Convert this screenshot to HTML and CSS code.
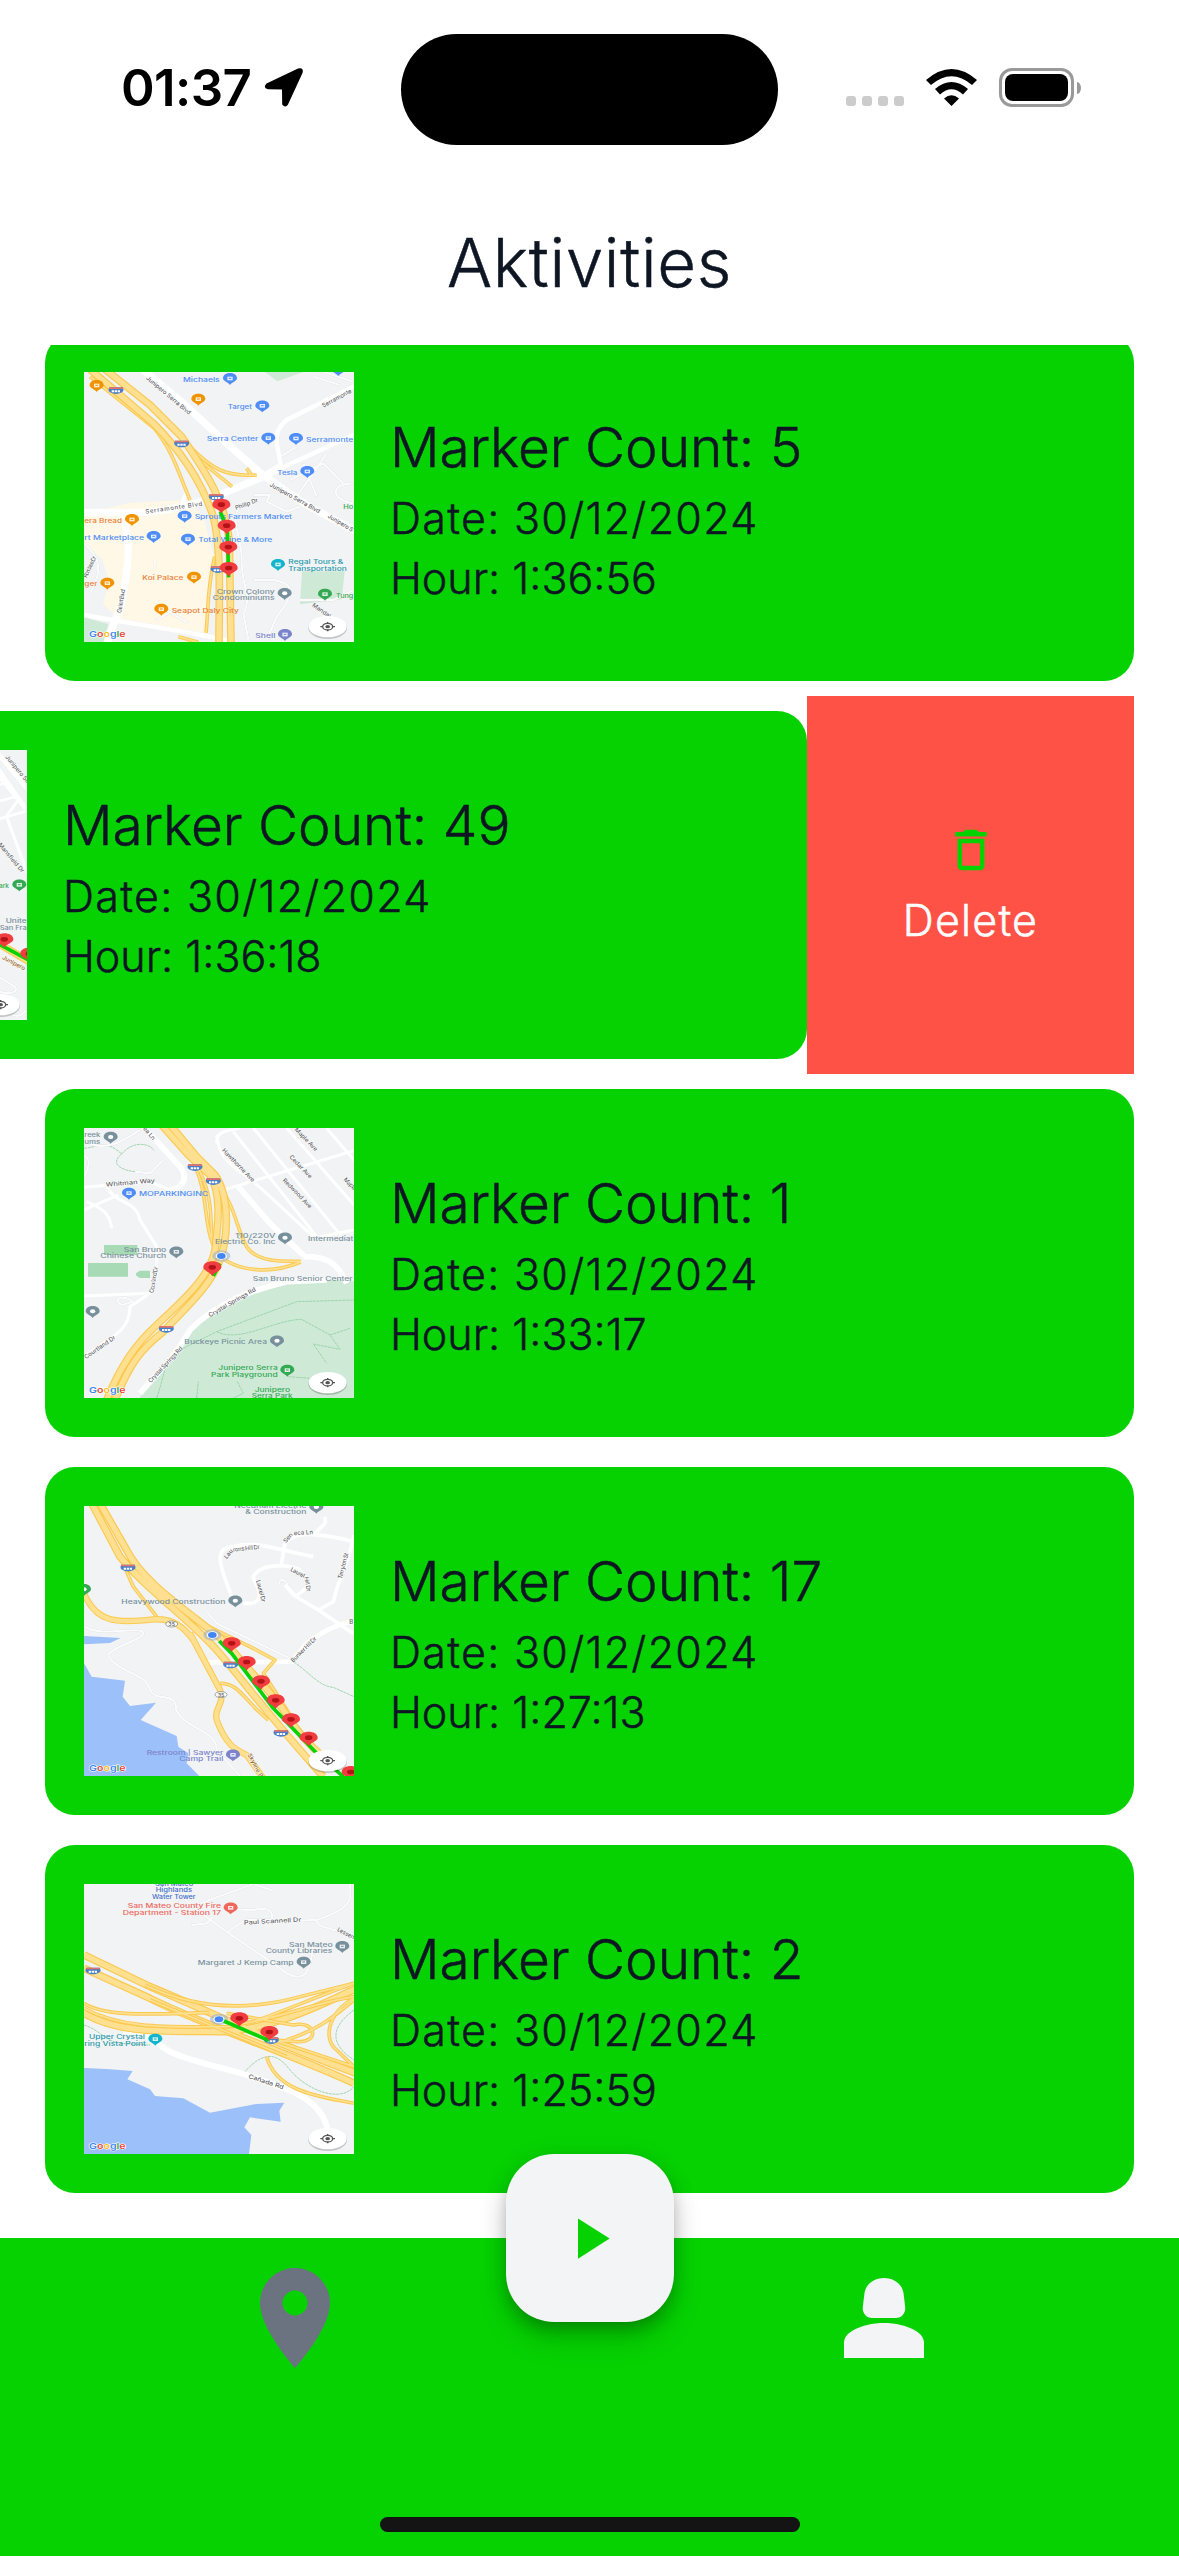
FILE: index.html
```html
<!DOCTYPE html>
<html lang="en">
<head>
<meta charset="utf-8">
<title>Aktivities</title>
<link rel="stylesheet" href="styles.css">
</head>
<body>
<svg class="sprite" aria-hidden="true">
  <defs>
    <path id="pin" d="M-21 0C-21-21 21-21 21 0C21 9 7 10 0 20C-7 10-21 9-21 0Z"/>
    <g id="poi"><use href="#pin" fill="currentColor"/><path d="M-8-5H8V6H-8Z" fill="#fff" opacity=".85"/><path d="M-4 0H4" stroke="currentColor" stroke-width="3"/></g>
    <g id="spot"><use href="#pin" fill="currentColor"/><ellipse rx="8" ry="6" fill="#fff"/></g>
    <g id="marker"><path d="M-27 0C-27-24 27-24 27 0C27 11 8 12 0 26C-8 12-27 11-27 0Z" fill="#f13c40"/><ellipse rx="11" ry="7" fill="#b31217"/></g>
    <g id="shield"><path d="M-20-9H20C28 5 15 9 0 11C-15 9-28 5-20-9Z" fill="#4a7fc9"/><path d="M-20-9H20V-4H-21Z" fill="#e2736a"/><path d="M-13 3H13" stroke="#fff" stroke-width="6" stroke-dasharray="7 2"/></g>
    <g id="me"><ellipse rx="27" ry="17" fill="#8fa9cf" opacity=".5"/><ellipse rx="17" ry="11" fill="#fff"/><ellipse rx="13" ry="9" fill="#4285f4"/></g>
    <g id="locate"><ellipse cx="731" cy="768" rx="58" ry="33" fill="#000" opacity=".2"/><ellipse cx="731" cy="764" rx="57" ry="32" fill="#fff"/><ellipse cx="731" cy="764" rx="15" ry="10" fill="none" stroke="#555" stroke-width="4"/><ellipse cx="731" cy="764" rx="7" ry="5" fill="#555"/><path d="M709 764H717M745 764H753M731 750V755M731 773V778" stroke="#555" stroke-width="4"/></g>
  </defs>
</svg>

<header class="status">
  <div class="status-left">
    <span class="clock">01:37</span>
    <svg class="loc" viewBox="0 0 39 39"><path d="M2.500 15.500L34 .6Q40-1 38.500 5L24 36.500Q21.500 40.500 18.200 36.500L18 21.500L4 21.200Q-1.500 20 2.500 15.500Z"/></svg>
  </div>
  <div class="island"></div>
  <div class="status-right">
    <div class="dots"><i></i><i></i><i></i><i></i></div>
    <svg class="wifi" viewBox="0 0 51 38"><path d="M0 11Q25.500-11 51 11L46 16Q25.500-1.500 5 16ZM9 20Q25.500 6 42 20L37 25.500Q25.500 15 14 25.500ZM18 29.500Q25.500 23 33 29.500L25.500 37Z"/></svg>
    <div class="battery"><div class="charge"></div></div>
    <div class="nub"></div>
  </div>
</header>

<h1 class="title">Aktivities</h1>

<main class="list">
  <section class="row">
    <article class="card">
      <svg class="map" viewBox="132 126 810 810">
        <defs>
          <path id="a1" d="M150 118L340 280C440 380 490 470 520 560C545 660 537 800 537 940M195 118L330 225L425 320C500 430 560 520 568 640L573 940"/>
          <path id="a2" d="M335 285C400 360 415 430 450 510M420 320C480 400 530 430 576 470M430 330C520 425 560 440 650 435M620 415L635 438M524 680C500 780 505 850 498 908M415 920L475 937M150 140L350 300"/>
        </defs>
        <path class="cream" d="M150 548L270 518L440 510L490 560L522 680L498 910L235 865L188 822L208 760L188 690L132 640V560Z"/>
        <path class="park" d="M675 126H790L712 154ZM786 724H914L905 808L780 823ZM132 862L205 882L190 936H132Z"/>
        <path class="lane" d="M600 520C570 580 600 600 605 680C600 760 640 800 610 850L625 930M640 495H690L680 515L740 545L780 530M640 750H700C770 760 760 800 710 860L680 930M750 450L850 400L910 460M770 500L860 370M790 400L830 500M940 460C870 460 870 510 940 520M720 380L770 350M820 140L900 165M850 126L940 155M132 640C180 680 190 720 150 790M780 810H880L940 780M345 690V710M380 840L445 880M350 870L400 840M420 520L440 490"/>
        <path class="road" stroke-width="22" d="M300 112L430 220L560 340L665 432L800 525L950 605"/>
        <path class="road" stroke-width="22" d="M132 548C250 545 340 560 480 515C560 490 620 460 680 435L725 408M248 560C275 640 265 700 250 790C240 850 220 870 203 940"/>
        <path class="road" stroke-width="13" d="M723 410C715 350 690 310 740 270L950 165M690 430L950 310M132 855C260 880 400 895 580 935M425 520L440 490"/>
        <use href="#a2" class="hw thin"/><use href="#a2" class="hw-in thin"/>
        <use href="#a1" class="hw"/><use href="#a1" class="hw-in"/>
        <use href="#shield" x="228" y="181"/><use href="#shield" x="425" y="341"/><use href="#shield" x="529" y="501"/><use href="#shield" x="534" y="718"/>
        <text class="lb blue" x="429" y="155" textLength="110" lengthAdjust="spacingAndGlyphs">Michaels</text>
        <text class="lb blue" x="563" y="237" textLength="73" lengthAdjust="spacingAndGlyphs">Target</text>
        <text class="lb blue" x="500" y="334" textLength="155" lengthAdjust="spacingAndGlyphs">Serra Center</text>
        <text class="lb blue" x="798" y="336" textLength="142" lengthAdjust="spacingAndGlyphs">Serramonte</text>
        <text class="lb blue" x="712" y="434" textLength="60" lengthAdjust="spacingAndGlyphs">Tesla</text>
        <text class="lb blue" x="464" y="568" textLength="292" lengthAdjust="spacingAndGlyphs">Sprouts Farmers Market</text>
        <text class="lb blue" x="475" y="637" textLength="222" lengthAdjust="spacingAndGlyphs">Total Wine &amp; More</text>
        <text class="lb blue" x="133" y="629" textLength="179" lengthAdjust="spacingAndGlyphs">rt Marketplace</text>
        <text class="lb orange" x="133" y="578" textLength="113" lengthAdjust="spacingAndGlyphs">era Bread</text>
        <text class="lb orange" x="307" y="751" textLength="123" lengthAdjust="spacingAndGlyphs">Koi Palace</text>
        <text class="lb orange" x="133" y="769" textLength="39" lengthAdjust="spacingAndGlyphs">ger</text>
        <text class="lb orange" x="395" y="848" textLength="202" lengthAdjust="spacingAndGlyphs">Seapot Daly City</text>
        <text class="lb teal" x="745" y="703" textLength="165" lengthAdjust="spacingAndGlyphs">Regal Tours &amp;</text>
        <text class="lb teal" x="745" y="723" textLength="175" lengthAdjust="spacingAndGlyphs">Transportation</text>
        <text class="lb grey" x="530" y="792" textLength="174" lengthAdjust="spacingAndGlyphs">Crown Colony</text>
        <text class="lb grey" x="518" y="811" textLength="186" lengthAdjust="spacingAndGlyphs">Condominiums</text>
        <text class="lb green" x="888" y="803" textLength="52" lengthAdjust="spacingAndGlyphs">Tung</text>
        <text class="lb green" x="910" y="536" textLength="30" lengthAdjust="spacingAndGlyphs">Ho</text>
        <text class="lb violet" x="646" y="923" textLength="60" lengthAdjust="spacingAndGlyphs">Shell</text>
        <text class="st" transform="translate(317 146)rotate(40)">Junipero Serra Blvd</text>
        <text class="st" transform="translate(688 468)rotate(29)">Junipero Serra Blvd</text>
        <text class="st" transform="translate(862 562)rotate(31)" textLength="86">Junipero S</text>
        <text class="st" transform="translate(317 551)rotate(-8)" textLength="172">Serramonte Blvd</text>
        <text class="st" transform="translate(850 233)rotate(-28)" textLength="98">Serramonte</text>
        <text class="st" transform="translate(588 540)rotate(-20)">Philip Dr</text>
        <text class="st" transform="translate(243 850)rotate(-80)" textLength="72">Gellert Blvd</text>
        <text class="st" transform="translate(140 745)rotate(-65)" textLength="70">Romtree Dr</text>
        <text class="st" transform="translate(815 828)rotate(35)">Mandal</text>
        <g class="blue"><use href="#poi" x="570" y="145"/><use href="#poi" x="667" y="227"/><use href="#poi" x="685" y="324"/><use href="#poi" x="768" y="325"/><use href="#poi" x="802" y="424"/><use href="#poi" x="434" y="558"/><use href="#poi" x="341" y="619"/><use href="#poi" x="444" y="627"/><use href="#poi" x="895" y="118"/></g>
        <g class="orange"><use href="#poi" x="170" y="166"/><use href="#poi" x="475" y="207"/><use href="#poi" x="276" y="568"/><use href="#poi" x="462" y="741"/><use href="#poi" x="202" y="759"/><use href="#poi" x="364" y="837"/></g>
        <use href="#poi" class="teal" x="714" y="703"/><use href="#spot" class="grey" x="734" y="790"/><use href="#poi" class="green" x="855" y="792"/><use href="#poi" class="violet" x="735" y="913"/>
        <path class="route" d="M541 545L562 600L566 742"/>
        <use href="#marker" x="544" y="524"/><use href="#marker" x="560" y="587"/><use href="#marker" x="565" y="651"/><use href="#marker" x="566" y="714"/>
        <text class="goog" x="147" y="922" textLength="110" lengthAdjust="spacingAndGlyphs"><tspan fill="#4285f4">G</tspan><tspan fill="#ea4335">o</tspan><tspan fill="#fbbc05">o</tspan><tspan fill="#4285f4">g</tspan><tspan fill="#34a853">l</tspan><tspan fill="#ea4335">e</tspan></text>
        <use href="#locate" x="132" y="126"/>
      </svg>
      <div class="info"><h2>Marker Count: 5</h2><p class="date">Date: 30/12/2024</p><p>Hour: 1:36:56</p></div>
    </article>
  </section>

  <section class="row">
    <article class="card">
      <svg class="map" viewBox="-728 180 810 810">
        <path class="road" stroke-width="14" d="M-20 172L90 305M-40 210L90 370"/>
        <path class="road" stroke-width="8" d="M-20 290L25 275M-20 338L55 318M-30 395L90 360M-10 225L90 370M20 378L90 565"/>
        <path class="road" stroke-width="8" d="M-20 240L60 325L20 378L90 570"/>
        <path class="lane" d="M-20 850L45 890C60 905 30 920-10 900M40 975C70 985 70 960 90 960"/>
        <path class="hw" d="M-20 750L100 822"/><path class="hw-in" d="M-20 750L100 822"/>
        <path class="route" d="M-10 758L90 812"/>
        <text class="st" transform="translate(16 202)rotate(50)">Junipero Serra</text>
        <text class="st" transform="translate(-5 465)rotate(50)">Mansfield Dr</text>
        <text class="st brown" transform="translate(6 806)rotate(28)">Junipero</text>
        <text class="lb green" x="-2" y="594" textLength="30" lengthAdjust="spacingAndGlyphs">ark</text>
        <text class="lb grey" x="18" y="699" textLength="63" lengthAdjust="spacingAndGlyphs">Unite</text>
        <text class="lb grey" x="0" y="719" textLength="81" lengthAdjust="spacingAndGlyphs">San Fra</text>
        <use href="#poi" class="green" x="59" y="584"/>
        <use href="#marker" x="14" y="748"/><use href="#marker" x="89" y="791"/>
        <use href="#locate" x="-728" y="180"/>
      </svg>
      <div class="info"><h2>Marker Count: 49</h2><p class="date">Date: 30/12/2024</p><p>Hour: 1:36:18</p></div>
    </article>
    <div class="delete">
      <svg viewBox="0 0 24 24"><path d="M6 19c0 1.100.9 2 2 2h8c1.100 0 2-.9 2-2V7H6v12zM8 9h8v10H8V9zm7.500-5-1-1h-5l-1 1H5v2h14V4z"/></svg>
      <span>Delete</span>
    </div>
  </section>

  <section class="row">
    <article class="card">
      <svg class="map" viewBox="132 144 810 810">
        <defs>
          <path id="c1" d="M365 135L445 225L510 285C545 340 535 430 525 510C510 590 430 660 350 735C290 790 245 850 200 960M395 140L470 230L525 285C570 350 565 470 540 540C510 620 440 680 370 755C300 810 270 850 225 960"/>
          <path id="c2" d="M470 270C505 350 490 430 520 495M480 275C520 360 510 420 516 470M535 310C590 390 590 450 620 500C650 545 720 545 782 544M555 540C600 570 690 585 782 546"/>
        </defs>
        <path class="park" d="M300 954C320 900 400 860 430 790C450 720 560 660 720 610L860 600L942 604V954Z"/>
        <path class="park dark" d="M192 495H292V525H192ZM144 549H264V590H144ZM300 572H330V594H300Q275 583 300 572Z"/>
        <path class="trail" d="M132 205C180 200 200 180 245 222C280 180 330 190 342 212M245 222C210 250 240 270 285 275M350 954C370 900 370 860 400 820L530 755L770 665L942 660M530 755C600 790 700 720 785 718L870 765L900 808L820 792L860 850M470 954L475 905M592 905L610 940L580 954M745 890L810 895M870 765L930 745"/>
        <path class="lane" d="M132 290C160 240 140 230 132 225M285 275L330 280L370 240M132 180C200 230 280 160 300 150M280 665C240 640 220 660 245 675Z"/>
        <path class="road" stroke-width="17" d="M310 140L420 260C450 300 420 330 385 330M595 320L690 430L795 530C850 530 890 540 920 610M300 940C350 880 400 840 450 750C520 680 600 640 740 605L860 600"/>
        <path class="road" stroke-width="9" d="M132 322L330 305L400 335M132 390L235 345M200 320C220 370 290 360 300 420L350 500V590L330 640L270 680C270 740 240 760 132 830M132 648L330 640M140 365C200 390 210 410 215 445M550 330L942 212M860 145L942 240M740 144L942 375M640 144L905 470M580 155L830 470M530 165C540 260 600 260 690 350L820 470M530 190C530 150 560 155 600 144M840 470L942 450"/>
        <use href="#c2" class="hw thin"/><use href="#c2" class="hw-in thin"/>
        <use href="#c1" class="hw"/><use href="#c1" class="hw-in"/>
        <use href="#shield" x="465" y="262"/><use href="#shield" x="520" y="304"/><use href="#shield" x="379" y="747"/>
        <text class="lb grey" x="133" y="172" textLength="48" lengthAdjust="spacingAndGlyphs">reek</text>
        <text class="lb grey" x="133" y="191" textLength="48" lengthAdjust="spacingAndGlyphs">ums</text>
        <text class="lb blue" x="297" y="348" textLength="208" lengthAdjust="spacingAndGlyphs">MOPARKINGINC</text>
        <text class="lb grey" x="251" y="516" textLength="128" lengthAdjust="spacingAndGlyphs">San Bruno</text>
        <text class="lb grey" x="181" y="535" textLength="198" lengthAdjust="spacingAndGlyphs">Chinese Church</text>
        <text class="lb grey" x="586" y="473" textLength="120" lengthAdjust="spacingAndGlyphs">110/220V</text>
        <text class="lb grey" x="525" y="492" textLength="181" lengthAdjust="spacingAndGlyphs">Electric Co. Inc</text>
        <text class="lb grey" x="804" y="482" textLength="136" lengthAdjust="spacingAndGlyphs">Intermediat</text>
        <text class="lb grey" x="638" y="603" textLength="300" lengthAdjust="spacingAndGlyphs">San Bruno Senior Center</text>
        <text class="lb grey" x="433" y="792" textLength="248" lengthAdjust="spacingAndGlyphs">Buckeye Picnic Area</text>
        <text class="lb green" x="535" y="870" textLength="178" lengthAdjust="spacingAndGlyphs">Junipero Serra</text>
        <text class="lb green" x="513" y="890" textLength="200" lengthAdjust="spacingAndGlyphs">Park Playground</text>
        <text class="lb green" x="644" y="936" textLength="106" lengthAdjust="spacingAndGlyphs">Junipero</text>
        <text class="lb green" x="635" y="953" textLength="123" lengthAdjust="spacingAndGlyphs">Serra Park</text>
        <text class="st" transform="translate(198 320)rotate(-5)" textLength="148" lengthAdjust="spacingAndGlyphs">Whitman Way</text>
        <text class="st" transform="translate(308 146)rotate(50)">ea Ln</text>
        <text class="st" transform="translate(545 212)rotate(46)">Hawthorne Ave</text>
        <text class="st" transform="translate(727 302)rotate(46)">Redwood Ave</text>
        <text class="st" transform="translate(747 232)rotate(46)">Cedar Ave</text>
        <text class="st" transform="translate(763 150)rotate(46)">Maple Ave</text>
        <text class="st" transform="translate(910 300)rotate(46)" textLength="44">Maple</text>
        <text class="st" transform="translate(340 640)rotate(-80)" textLength="80">Courtland Dr</text>
        <text class="st" transform="translate(138 838)rotate(-35)">Courtland Dr</text>
        <text class="st" transform="translate(510 712)rotate(-30)">Crystal Springs Rd</text>
        <text class="st" transform="translate(332 910)rotate(-47)" textLength="142">Crystal Springs Rd</text>
        <g class="grey"><use href="#spot" x="212" y="171"/><use href="#poi" x="409" y="515"/><use href="#spot" x="735" y="473"/><use href="#spot" x="158" y="694"/><use href="#spot" x="711" y="782"/></g>
        <use href="#poi" class="blue" x="267" y="339"/><use href="#poi" class="green" x="742" y="870"/>
        <use href="#me" x="544" y="528"/>
        <path class="route" d="M520 588L540 550"/>
        <use href="#marker" x="517" y="562"/>
        <text class="goog" x="147" y="940" textLength="110" lengthAdjust="spacingAndGlyphs"><tspan fill="#4285f4">G</tspan><tspan fill="#ea4335">o</tspan><tspan fill="#fbbc05">o</tspan><tspan fill="#4285f4">g</tspan><tspan fill="#34a853">l</tspan><tspan fill="#ea4335">e</tspan></text>
        <use href="#locate" x="132" y="144"/>
      </svg>
      <div class="info"><h2>Marker Count: 1</h2><p class="date">Date: 30/12/2024</p><p>Hour: 1:33:17</p></div>
    </article>
  </section>

  <section class="row">
    <article class="card">
      <svg class="map" viewBox="132 138 810 810">
        <defs>
          <path id="d1" d="M155 130L240 290C310 380 440 470 530 570C600 650 680 760 850 950M180 130L260 270C310 370 440 450 560 550C640 650 700 700 730 750C760 800 800 850 860 900"/>
          <path id="d2" d="M132 400C170 490 230 490 340 478C400 475 430 500 460 540L540 690C555 740 520 740 530 780C560 860 590 870 620 885L670 955M450 520L540 690"/>
          <path id="d3" d="M240 290L280 380L350 470M490 492L640 565L705 600L670 640L760 780M540 670C600 670 610 720 685 780M640 740L685 780"/>
        </defs>
        <path class="water" d="M132 528L242 534L210 549L132 553ZM132 610L155 650L255 662L248 710L270 738L348 728L302 780L410 828L415 860L445 880L440 910L478 948H132Z"/>
        <path class="lane" d="M132 498C180 530 250 505 300 512C350 530 200 560 205 590C240 640 320 640 330 690C350 730 410 690 408 750C440 810 530 810 530 870L600 948M500 455L530 490L760 600"/>
        <path class="lane" d="M720 375C710 355 740 355 742 375L770 405"/>
        <path class="trail" d="M762 606C810 640 840 680 880 682L942 710"/>
        <path class="road" stroke-width="11" d="M575 410C550 340 510 260 580 260C640 240 720 270 820 290M723 317L735 250C760 215 820 215 942 245M642 430C680 400 640 370 640 350C660 310 740 310 780 330C820 370 800 390 765 408L735 375M765 408L835 450L942 522M835 450L880 425C900 340 930 300 942 225M825 220L855 190V170M610 430H640"/>
        <path class="road" stroke-width="14" d="M500 608L755 605L800 550C840 520 890 490 942 485"/>
        <use href="#d3" class="hw thin"/><use href="#d3" class="hw-in thin"/>
        <use href="#d2" class="hw mid"/><use href="#d2" class="hw-in mid"/>
        <use href="#d1" class="hw"/><use href="#d1" class="hw-in"/>
        <use href="#shield" x="264" y="323"/><use href="#shield" x="572" y="614"/><use href="#shield" x="723" y="819"/>
        <g class="oval"><ellipse cx="395" cy="492" rx="18" ry="9"/><ellipse cx="543" cy="704" rx="18" ry="9"/></g>
        <text class="tiny" x="385" y="498">35</text><text class="tiny" x="533" y="710">35</text>
        <text class="lb grey" x="583" y="143" textLength="216" lengthAdjust="spacingAndGlyphs">Needham Electric</text>
        <text class="lb grey" x="616" y="162" textLength="183" lengthAdjust="spacingAndGlyphs">&amp; Construction</text>
        <text class="lb grey" x="244" y="431" textLength="312" lengthAdjust="spacingAndGlyphs">Heavywood Construction</text>
        <text class="lb violet" x="320" y="885" textLength="230" lengthAdjust="spacingAndGlyphs">Restroom | Sawyer</text>
        <text class="lb violet" x="418" y="904" textLength="132" lengthAdjust="spacingAndGlyphs">Camp Trail</text>
        <text class="st" transform="translate(560 298)rotate(-50)">Lau</text>
        <text class="st" transform="translate(580 275)rotate(-6)" textLength="80">rons Hill Dr</text>
        <text class="st" transform="translate(738 250)rotate(-50)">Sen</text>
        <text class="st" transform="translate(762 226)rotate(-4)">eca Ln</text>
        <text class="st" transform="translate(750 332)rotate(28)" textLength="46">Laurel</text>
        <text class="st" transform="translate(793 352)rotate(80)" textLength="44">Hill Dr</text>
        <text class="st" transform="translate(648 362)rotate(75)" textLength="68">Laurel Dr</text>
        <text class="st" transform="translate(905 358)rotate(-75)" textLength="80">Tarryton St</text>
        <text class="st" transform="translate(760 608)rotate(-45)" textLength="100">Bunker Hill Dr</text>
        <text class="st" x="928" y="492">B</text>
        <text class="st brown" transform="translate(622 884)rotate(62)">Skyline Blvd</text>
        <g class="grey"><use href="#spot" x="829" y="141"/><use href="#spot" x="586" y="422"/></g>
        <use href="#poi" class="violet" x="579" y="884"/><use href="#spot" class="green" x="132" y="388"/>
        <use href="#me" x="517" y="525"/>
        <path class="route" d="M538 543L575 580L700 745L830 880L910 950"/>
        <use href="#marker" x="575" y="550"/><use href="#marker" x="620" y="606"/><use href="#marker" x="663" y="664"/><use href="#marker" x="707" y="721"/><use href="#marker" x="753" y="778"/><use href="#marker" x="806" y="833"/><use href="#marker" x="932" y="936"/>
        <text class="goog" x="147" y="934" textLength="110" lengthAdjust="spacingAndGlyphs"><tspan fill="#4285f4">G</tspan><tspan fill="#ea4335">o</tspan><tspan fill="#fbbc05">o</tspan><tspan fill="#4285f4">g</tspan><tspan fill="#34a853">l</tspan><tspan fill="#ea4335">e</tspan></text>
        <use href="#locate" x="132" y="138"/>
      </svg>
      <div class="info"><h2>Marker Count: 17</h2><p class="date">Date: 30/12/2024</p><p>Hour: 1:27:13</p></div>
    </article>
  </section>

  <section class="row">
    <article class="card">
      <svg class="map" viewBox="132 132 810 810">
        <defs>
          <path id="e1" d="M132 385L330 475C500 560 700 620 942 730M132 520C250 590 420 570 560 575C720 560 850 490 950 445M132 345L330 440C500 510 700 610 950 700"/>
          <path id="e2" d="M132 490C200 535 360 520 510 518M315 435C450 500 600 520 780 470L942 430M132 505C250 570 400 560 560 560C700 540 820 490 942 470M942 475C860 520 850 600 890 630L942 680M680 650C710 760 850 770 942 790M560 520L760 555C830 540 840 610 770 605L700 600M740 600C830 570 870 540 942 480M330 480L740 650M640 545C740 510 830 470 942 430M700 600L942 680"/>
        </defs>
        <path class="water" d="M132 684L200 687L278 693L262 718L330 748L345 768L430 775L510 818L650 792L733 788L718 812L722 845L630 832L613 862L634 885L627 942H132Z"/>
        <path class="lane" d="M420 165L470 210L560 275C640 330 700 370 740 400C800 430 810 390 820 320M480 190L640 132L700 152M455 255L500 250L520 230M575 208L640 210C690 200 700 215 695 240L620 240C580 260 570 270 562 280M690 245L830 240C950 200 930 170 930 132M830 240C830 270 900 260 942 300M330 132L420 165"/>
        <path class="trail" d="M132 555C180 570 190 600 240 610L330 615M612 698C680 620 720 650 750 690C800 750 900 790 942 740M942 510C860 570 880 620 942 660"/>
        <path class="road" stroke-width="18" d="M250 572C340 580 340 610 400 640C470 670 540 680 620 705L735 745C800 770 850 810 862 865"/>
        <use href="#e1" class="hw"/><use href="#e1" class="hw-in"/>
        <use href="#e2" class="hw thin"/><use href="#e2" class="hw-in thin"/>
        <use href="#shield" x="159" y="392"/><use href="#shield" x="694" y="601"/>
        <text class="lb navy" x="345" y="138" textLength="115" lengthAdjust="spacingAndGlyphs">San Mateo</text>
        <text class="lb navy" x="347" y="157" textLength="109" lengthAdjust="spacingAndGlyphs">Highlands</text>
        <text class="lb navy" x="336" y="176" textLength="131" lengthAdjust="spacingAndGlyphs">Water Tower</text>
        <text class="lb red" x="263" y="205" textLength="280" lengthAdjust="spacingAndGlyphs">San Mateo County Fire</text>
        <text class="lb red" x="248" y="225" textLength="295" lengthAdjust="spacingAndGlyphs">Department - Station 17</text>
        <text class="lb grey" x="747" y="320" textLength="131" lengthAdjust="spacingAndGlyphs">San Mateo</text>
        <text class="lb grey" x="677" y="340" textLength="200" lengthAdjust="spacingAndGlyphs">County Libraries</text>
        <text class="lb grey" x="473" y="376" textLength="288" lengthAdjust="spacingAndGlyphs">Margaret J Kemp Camp</text>
        <text class="lb teal" x="147" y="598" textLength="168" lengthAdjust="spacingAndGlyphs">Upper Crystal</text>
        <text class="lb teal" x="133" y="618" textLength="185" lengthAdjust="spacingAndGlyphs">ring Vista Point</text>
        <text class="st" transform="translate(612 254)rotate(-3)" textLength="172" lengthAdjust="spacingAndGlyphs">Paul Scannell Dr</text>
        <text class="st" transform="translate(890 272)rotate(28)" textLength="56">Lessen</text>
        <text class="st" transform="translate(624 714)rotate(18)" textLength="110" lengthAdjust="spacingAndGlyphs">Cañada Rd</text>
        <use href="#poi" class="red" x="572" y="203"/><use href="#poi" class="teal" x="346" y="597"/>
        <g class="grey"><use href="#poi" x="907" y="319"/><use href="#poi" x="791" y="366"/></g>
        <use href="#me" x="537" y="538"/>
        <path class="route" d="M552 543L687 602"/>
        <use href="#marker" x="598" y="535"/><use href="#marker" x="688" y="576"/>
        <text class="goog" x="147" y="928" textLength="110" lengthAdjust="spacingAndGlyphs"><tspan fill="#4285f4">G</tspan><tspan fill="#ea4335">o</tspan><tspan fill="#fbbc05">o</tspan><tspan fill="#4285f4">g</tspan><tspan fill="#34a853">l</tspan><tspan fill="#ea4335">e</tspan></text>
        <use href="#locate" x="132" y="132"/>
      </svg>
      <div class="info"><h2>Marker Count: 2</h2><p class="date">Date: 30/12/2024</p><p>Hour: 1:25:59</p></div>
    </article>
  </section>
</main>

<nav class="tabs">
  <div class="tab"><svg class="place" viewBox="0 0 24 24"><path d="M12 2C8.130 2 5 5.130 5 9c0 5.250 7 13 7 13s7-7.750 7-13c0-3.870-3.130-7-7-7zm0 9.500a2.500 2.500 0 1 1 0-5 2.500 2.500 0 0 1 0 5z"/></svg></div>
  <div class="tab"><svg class="person" viewBox="0 0 80 80"><path d="M40 0C50 0 58 6 59.500 15L61.300 30C61.300 36 57 40 52 40H28C23 40 18.700 36 18.700 30L20.500 15C22 6 30 0 40 0ZM0 80V65C0 60 3 56 8 53C17 47.500 29 45 40 45S63 47.500 72 53C77 56 80 60 80 65V80Z"/></svg></div>
  <div class="fab"><svg viewBox="0 0 24 24"><path d="M8 5v14l11-7z"/></svg></div>
  <div class="home-bar"></div>
</nav>
</body>
</html>
```
FILE: styles.css
```css
* { box-sizing: border-box; margin: 0; padding: 0; }
body {
  width: 1179px;
  height: 2556px;
  display: flex;
  flex-direction: column;
  overflow: hidden;
  background: #fff;
  color: #0f1623;
  font-family: Inter, "Open Sans", sans-serif;
  font-weight: 300;
}
.sprite { position: absolute; width: 0; height: 0; }

.status {
  height: 177px;
  display: grid;
  grid-template-columns: 401px 377px 401px;
  align-items: center;
  color: #000;
}
.status-left { display: flex; align-items: center; padding: 0 0 2px 121px; gap: 12px; }
.clock { font-size: 51px; line-height: 60px; font-weight: 600; width: 131px; letter-spacing: -0.6px; white-space: nowrap; }
.loc { width: 39px; height: 39px; }
.island { height: 111px; margin-top: 1px; border-radius: 56px; background: #000; }
.status-right { display: flex; align-items: center; padding: 0 0 2px 68px; }
.dots { display: flex; gap: 6px; padding-top: 26px; margin-right: 22px; }
.dots i { width: 10px; height: 10px; border-radius: 3px; background: #ccc; }
.wifi { width: 51px; height: 38px; margin-right: 22px; }
.battery { width: 75px; height: 39px; padding: 3px; border: 3px solid #999; border-radius: 13px; }
.charge { height: 27px; border-radius: 8px; background: #000; }
.nub { width: 4px; height: 12px; margin-left: 3px; border-radius: 0 4px 4px 0 / 0 6px 6px 0; background: #999; }

.title {
  height: 168px;
  line-height: 172px;
  text-align: center;
  font-size: 67px;
  font-weight: 300;
  letter-spacing: 0.7px;
  -webkit-text-stroke: 0.5px currentColor;
}

.list { height: 1893px; overflow: hidden; }
.row {
  height: 378px;
  padding: 0 45px;
  display: flex;
  justify-content: flex-end;
  align-items: center;
}
.row:first-child { margin-top: -27px; }
.card {
  flex: 0 0 1089px;
  height: 348px;
  padding: 39px;
  display: flex;
  align-items: center;
  gap: 36px;
  border-radius: 30px;
  background: #06d202;
}
.map { flex: none; width: 270px; height: 270px; background: #f1f3f4; overflow: hidden; }
.info { white-space: nowrap; -webkit-text-stroke: 0.5px currentColor; }
.info h2 { font-size: 55px; line-height: 82px; font-weight: 300; }
.info p { font-size: 43px; line-height: 60px; }
.info .date { letter-spacing: 1.3px; }
.delete {
  flex: 0 0 327px;
  height: 378px;
  display: flex;
  flex-direction: column;
  align-items: center;
  justify-content: center;
  gap: 16px;
  padding-bottom: 1px;
  background: #ff5247;
  color: #fff;
  font-size: 43px;
  line-height: 54px;
  letter-spacing: 1.2px;
  -webkit-text-stroke: 0.5px currentColor;
}
.delete svg { width: 54px; height: 54px; fill: #06d202; stroke: none; }

.cream { fill: #fff8e6; }
.park { fill: #ceead6; }
.park.dark { fill: #a8dab5; }
.water { fill: #9cc0f9; }
.road, .lane, .trail, .hw, .hw-in, .route { fill: none; stroke-linecap: butt; stroke-linejoin: round; }
.road { stroke: #fff; }
.lane { stroke: #fbfbfc; stroke-width: 7; filter: drop-shadow(0 0 1px #c5c8cc); }
.trail { stroke: #93cfa4; stroke-width: 2.500; stroke-dasharray: 9 2; }
.hw { stroke: #fbc950; stroke-width: 23; }
.hw-in { stroke: #fee090; stroke-width: 16; }
.hw.mid { stroke-width: 19; }
.hw-in.mid { stroke-width: 13; }
.hw.thin { stroke-width: 11; }
.hw-in.thin { stroke-width: 5; }
.route { stroke: #06d202; stroke-width: 11; }
.lb, .st, .tiny { font-family: Inter, sans-serif; font-weight: 500; fill: currentColor; }
.lb { font-size: 18px; }
.st { font-size: 18px; color: #5f6368; stroke: #fff; stroke-width: 3; paint-order: stroke; }
.st.brown { color: #94631a; }
.tiny { font-size: 16px; fill: #555; }
.oval { fill: #fff; stroke: #777; stroke-width: 2; }
.goog { font-family: Inter, sans-serif; font-size: 24px; font-weight: 600; stroke: #fff; stroke-width: 3; paint-order: stroke; }
.blue { color: #4e8df5; }
.navy { color: #3d6fc9; }
.orange { color: #f09300; }
.lb.orange { color: #e8803a; }
.teal { color: #12b5cb; }
.lb.teal { color: #2a9aac; }
.grey { color: #78909c; }
.green { color: #34a853; }
.violet { color: #7b83cb; }
.red { color: #ee675c; }

.tabs {
  position: relative;
  height: 318px;
  padding-top: 20px;
  display: grid;
  grid-template-columns: 1fr 1fr;
  background: #06d202;
}
.tab { height: 120px; display: flex; align-items: center; justify-content: center; }
.place { width: 120px; height: 120px; fill: #6b7280; }
.person { width: 80px; height: 80px; fill: #f3f4f6; }
.fab {
  position: absolute;
  left: 505.5px;
  top: -84px;
  width: 168px;
  height: 168px;
  display: flex;
  align-items: center;
  justify-content: center;
  border-radius: 48px;
  background: #f3f4f6;
  box-shadow: 0 18px 30px rgba(0, 0, 0, .14), 0 9px 15px -3px rgba(0, 0, 0, .2), 0 3px 24px rgba(0, 0, 0, .1);
}
.fab svg { width: 69px; height: 69px; fill: #06d202; }
.home-bar {
  position: absolute;
  left: 380px;
  bottom: 24px;
  width: 420px;
  height: 15px;
  border-radius: 8px;
  background: #141414;
}
```
